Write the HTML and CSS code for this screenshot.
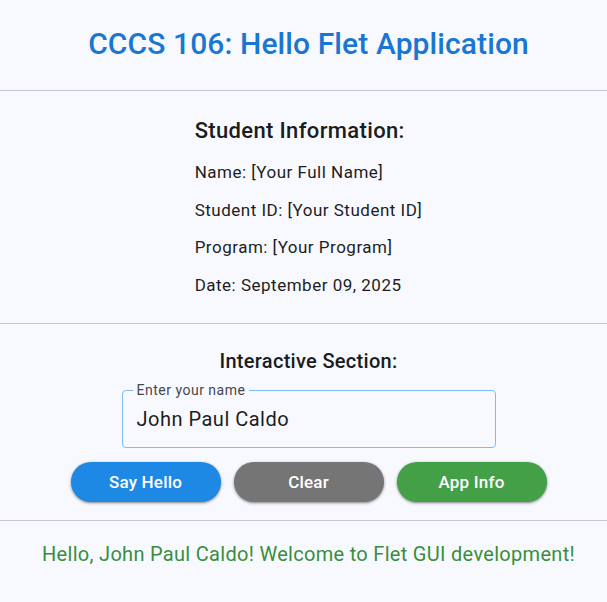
FILE: index.html
```html
<!DOCTYPE html>
<html>
<head>
<meta charset="utf-8">
<link rel="stylesheet" href="styles.css">
</head>
<body>
<div class="page">
  <header class="section header">
    <h1 class="title">CCCS 106: Hello Flet Application</h1>
  </header>
  <section class="section info">
    <div class="info-col">
      <h2 class="heading">Student Information:</h2>
      <div class="lines">
        <div class="line">Name: [Your Full Name]</div>
        <div class="line">Student ID: [Your Student ID]</div>
        <div class="line">Program: [Your Program]</div>
        <div class="line">Date: September 09, 2025</div>
      </div>
    </div>
  </section>
  <section class="section interactive">
    <h2 class="heading heading-small">Interactive Section:</h2>
    <div class="field">
      <span class="field-label">Enter your name</span>
      <div class="field-value">John Paul Caldo</div>
    </div>
    <div class="buttons">
      <button class="btn btn-blue">Say Hello</button>
      <button class="btn btn-grey">Clear</button>
      <button class="btn btn-green">App Info</button>
    </div>
  </section>
  <section class="section greeting-sec">
    <p class="greeting">Hello, John Paul Caldo! Welcome to Flet GUI development!</p>
  </section>
</div>
</body>
</html>
```

FILE: styles.css
```css
* { box-sizing: border-box; }
html, body {
  margin: 0;
  padding: 0;
  background: #f8f9ff;
  font-family: Roboto, "Liberation Sans", sans-serif;
  color: #1a1c1e;
}
.page {
  width: 607px;
  height: 602px;
  display: flex;
  flex-direction: column;
}
.section {
  padding-left: 10px;
  display: flex;
  flex-direction: column;
  align-items: center;
}
.header {
  padding-top: 27px;
  padding-bottom: 29px;
  border-bottom: 1px solid #c4c6d0;
}
.title {
  margin: 0;
  font-size: 30px;
  line-height: 34px;
  font-weight: 500;
  letter-spacing: 0.1px;
  color: #1976d2;
  white-space: nowrap;
}
.info {
  padding-top: 26px;
  padding-bottom: 26px;
  border-bottom: 1px solid #c4c6d0;
}
.info-col {
  display: flex;
  flex-direction: column;
  align-items: flex-start;
}
.heading {
  margin: 0;
  font-size: 22px;
  line-height: 28px;
  font-weight: 500;
  letter-spacing: 0.35px;
  color: #1a1c1e;
  white-space: nowrap;
}
.heading-small {
  font-size: 20px;
  letter-spacing: 0.3px;
}
.lines {
  margin-top: 15px;
  display: flex;
  flex-direction: column;
  gap: 13.5px;
}
.line {
  font-size: 17px;
  line-height: 24px;
  letter-spacing: 0.5px;
  color: #1d1d21;
  white-space: nowrap;
}
.interactive {
  padding-top: 23px;
  padding-bottom: 18px;
  border-bottom: 1px solid #c4c6d0;
}
.field {
  position: relative;
  margin-top: 15px;
  width: 374px;
  height: 58px;
  border: 1px solid #7cbdf3;
  border-radius: 4px;
  padding: 0 14px;
  display: flex;
  align-items: center;
}
.field-label {
  position: absolute;
  top: -10px;
  left: 10px;
  padding: 0 4px;
  background: #f8f9ff;
  font-size: 14px;
  line-height: 18px;
  letter-spacing: 0.5px;
  color: #44474e;
}
.field-value {
  font-size: 20px;
  line-height: 26px;
  letter-spacing: 0.5px;
  color: #1d1d21;
  margin-top: 1px;
}
.buttons {
  margin-top: 14px;
  display: flex;
  gap: 13px;
}
.btn {
  width: 150px;
  height: 40px;
  border: none;
  border-radius: 20px;
  font-family: Roboto, "Liberation Sans", sans-serif;
  font-size: 17px;
  font-weight: 500;
  letter-spacing: 0.2px;
  color: #ffffff;
  box-shadow: 0 1px 2px rgba(0,0,0,0.3), 0 1px 3px 1px rgba(0,0,0,0.15);
}
.btn-blue { background: #1e88e5; }
.btn-grey { background: #757575; }
.btn-green { background: #43a047; }
.greeting-sec {
  padding-top: 19px;
}
.greeting {
  margin: 0;
  font-size: 20px;
  line-height: 28px;
  letter-spacing: 0.3px;
  color: #388e3c;
  white-space: nowrap;
}
```
